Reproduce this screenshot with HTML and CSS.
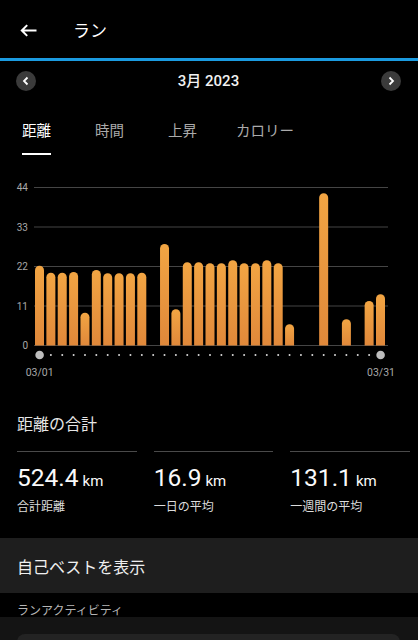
FILE: index.html
```html
<!DOCTYPE html>
<html lang="ja">
<head>
<meta charset="utf-8">
<title>ラン</title>
<link rel="stylesheet" href="styles.css">
</head>
<body>
<div class="app">
  <header class="topbar">
    <svg class="back" width="17" height="13" viewBox="0 0 17 13"><path d="M1.8 6.5H16.5M7.2 1.1L1.8 6.5L7.2 11.9" fill="none" stroke="#fff" stroke-width="2"/></svg>
    <h1 class="title">ラン</h1>
  </header>
  <div class="accent"></div>
  <div class="month">
    <span class="nav"><svg width="20" height="20" viewBox="0 0 20 20"><path d="M11.5 6.5L8 10L11.5 13.5" fill="none" stroke="#fff" stroke-width="1.8"/></svg></span>
    <span class="month-label">3月 2023</span>
    <span class="nav"><svg width="20" height="20" viewBox="0 0 20 20"><path d="M8.5 6.5L12 10L8.5 13.5" fill="none" stroke="#fff" stroke-width="1.8"/></svg></span>
  </div>
  <nav class="tabs">
    <div class="tab active"><span class="tab-label">距離</span></div>
    <div class="tab"><span class="tab-label">時間</span></div>
    <div class="tab"><span class="tab-label">上昇</span></div>
    <div class="tab"><span class="tab-label">カロリー</span></div>
  </nav>
  <div class="chart">
    <svg width="418" height="215" viewBox="0 0 418 215">
      <defs>
        <linearGradient id="barg" x1="0" y1="0" x2="0" y2="1">
          <stop offset="0" stop-color="#f2a543"/>
          <stop offset="1" stop-color="#e0883a"/>
        </linearGradient>
      </defs>
      <g stroke="#454545" stroke-width="1">
        <line x1="34" y1="17.5" x2="388" y2="17.5"/>
        <line x1="34" y1="57" x2="388" y2="57"/>
        <line x1="34" y1="96.5" x2="388" y2="96.5"/>
        <line x1="34" y1="136" x2="388" y2="136"/>
        <line x1="34" y1="175.5" x2="388" y2="175.5"/>
      </g>
      <g class="axis" fill="#a8a8a8" font-size="10" text-anchor="end">
        <text x="28" y="21">44</text>
        <text x="28" y="60.5">33</text>
        <text x="28" y="100">22</text>
        <text x="28" y="139.5">11</text>
        <text x="28" y="179">0</text>
      </g>
      <g fill="url(#barg)">
        <path d="M35 175.5V100.2a4.5 4.5 0 0 1 9 0V175.5Z"/>
        <path d="M46.37 175.5V107.2a4.5 4.5 0 0 1 9 0V175.5Z"/>
        <path d="M57.73 175.5V107.2a4.5 4.5 0 0 1 9 0V175.5Z"/>
        <path d="M69.1 175.5V106.5a4.5 4.5 0 0 1 9 0V175.5Z"/>
        <path d="M80.47 175.5V147.2a4.5 4.5 0 0 1 9 0V175.5Z"/>
        <path d="M91.83 175.5V104.5a4.5 4.5 0 0 1 9 0V175.5Z"/>
        <path d="M103.2 175.5V107.8a4.5 4.5 0 0 1 9 0V175.5Z"/>
        <path d="M114.57 175.5V107.8a4.5 4.5 0 0 1 9 0V175.5Z"/>
        <path d="M125.93 175.5V107.8a4.5 4.5 0 0 1 9 0V175.5Z"/>
        <path d="M137.3 175.5V107.2a4.5 4.5 0 0 1 9 0V175.5Z"/>
        <path d="M160.03 175.5V78.5a4.5 4.5 0 0 1 9 0V175.5Z"/>
        <path d="M171.4 175.5V143.8a4.5 4.5 0 0 1 9 0V175.5Z"/>
        <path d="M182.77 175.5V96.8a4.5 4.5 0 0 1 9 0V175.5Z"/>
        <path d="M194.13 175.5V96.8a4.5 4.5 0 0 1 9 0V175.5Z"/>
        <path d="M205.5 175.5V97.8a4.5 4.5 0 0 1 9 0V175.5Z"/>
        <path d="M216.87 175.5V97.8a4.5 4.5 0 0 1 9 0V175.5Z"/>
        <path d="M228.23 175.5V94.8a4.5 4.5 0 0 1 9 0V175.5Z"/>
        <path d="M239.6 175.5V97.8a4.5 4.5 0 0 1 9 0V175.5Z"/>
        <path d="M250.97 175.5V97.8a4.5 4.5 0 0 1 9 0V175.5Z"/>
        <path d="M262.33 175.5V94.8a4.5 4.5 0 0 1 9 0V175.5Z"/>
        <path d="M273.7 175.5V97.8a4.5 4.5 0 0 1 9 0V175.5Z"/>
        <path d="M285.07 175.5V158.8a4.5 4.5 0 0 1 9 0V175.5Z"/>
        <path d="M319.17 175.5V27.8a4.5 4.5 0 0 1 9 0V175.5Z"/>
        <path d="M341.9 175.5V153.8a4.5 4.5 0 0 1 9 0V175.5Z"/>
        <path d="M364.63 175.5V135.5a4.5 4.5 0 0 1 9 0V175.5Z"/>
        <path d="M376 175.5V128.8a4.5 4.5 0 0 1 9 0V175.5Z"/>
      </g>
      <g fill="#d8d8d8">
        <circle cx="50.87" cy="185" r="1"/>
        <circle cx="62.23" cy="185" r="1"/>
        <circle cx="73.6" cy="185" r="1"/>
        <circle cx="84.97" cy="185" r="1"/>
        <circle cx="96.33" cy="185" r="1"/>
        <circle cx="107.7" cy="185" r="1"/>
        <circle cx="119.07" cy="185" r="1"/>
        <circle cx="130.43" cy="185" r="1"/>
        <circle cx="141.8" cy="185" r="1"/>
        <circle cx="153.17" cy="185" r="1"/>
        <circle cx="164.53" cy="185" r="1"/>
        <circle cx="175.9" cy="185" r="1"/>
        <circle cx="187.27" cy="185" r="1"/>
        <circle cx="198.63" cy="185" r="1"/>
        <circle cx="210" cy="185" r="1"/>
        <circle cx="221.37" cy="185" r="1"/>
        <circle cx="232.73" cy="185" r="1"/>
        <circle cx="244.1" cy="185" r="1"/>
        <circle cx="255.47" cy="185" r="1"/>
        <circle cx="266.83" cy="185" r="1"/>
        <circle cx="278.2" cy="185" r="1"/>
        <circle cx="289.57" cy="185" r="1"/>
        <circle cx="300.93" cy="185" r="1"/>
        <circle cx="312.3" cy="185" r="1"/>
        <circle cx="323.67" cy="185" r="1"/>
        <circle cx="335.03" cy="185" r="1"/>
        <circle cx="346.4" cy="185" r="1"/>
        <circle cx="357.77" cy="185" r="1"/>
        <circle cx="369.13" cy="185" r="1"/>
      </g>
      <circle cx="39.6" cy="185" r="4.3" fill="#bdbdbd"/>
      <circle cx="380.6" cy="185" r="4.3" fill="#bdbdbd"/>
      <g class="axis" fill="#a8a8a8" font-size="10.5" text-anchor="middle">
        <text x="39.6" y="205.5">03/01</text>
        <text x="381" y="205.5">03/31</text>
      </g>
    </svg>
  </div>
  <section class="summary">
    <h2 class="summary-title">距離の合計</h2>
    <div class="stats">
      <div class="stat">
        <div class="stat-value">524.4<span class="unit">km</span></div>
        <div class="stat-label">合計距離</div>
      </div>
      <div class="stat">
        <div class="stat-value">16.9<span class="unit">km</span></div>
        <div class="stat-label">一日の平均</div>
      </div>
      <div class="stat">
        <div class="stat-value">131.1<span class="unit">km</span></div>
        <div class="stat-label">一週間の平均</div>
      </div>
    </div>
  </section>
  <div class="best">自己ベストを表示</div>
  <div class="section-label">ランアクティビティ</div>
  <div class="activity"><div class="card"></div></div>
</div>
</body>
</html>
```
FILE: styles.css
```css
html, body {
  margin: 0;
  padding: 0;
  background: #000;
}
body {
  font-family: Roboto, "Noto Sans CJK JP", sans-serif;
  color: #fff;
  overflow: hidden;
}
.app {
  width: 418px;
  height: 640px;
  overflow: hidden;
}
.topbar {
  height: 58px;
  display: flex;
  align-items: center;
  padding-left: 20px;
  box-sizing: border-box;
}
.back {
  display: block;
  margin-top: 3px;
}
.title {
  margin: 3px 0 0 36px;
  font-size: 17px;
  font-weight: 400;
  line-height: 20px;
}
.accent {
  height: 3px;
  background: #1b9be0;
}
.month {
  height: 40px;
  display: flex;
  align-items: center;
  justify-content: space-between;
  padding: 0 17px 0 16px;
}
.nav {
  width: 20px;
  height: 20px;
  border-radius: 50%;
  background: #3b3b3b;
  display: block;
}
.nav svg {
  display: block;
}
.month-label {
  font-size: 15px;
  font-weight: 500;
  line-height: 20px;
  color: #f2f2f2;
}
.tabs {
  display: flex;
  padding-top: 21px;
}
.tab {
  min-width: 73px;
  padding: 0 17px;
  box-sizing: border-box;
  display: flex;
  justify-content: center;
}
.tab-label {
  font-size: 14.5px;
  line-height: 20px;
  padding-bottom: 11px;
  border-bottom: 2px solid transparent;
  color: #ababab;
}
.tab.active .tab-label {
  color: #fff;
  border-bottom-color: #fff;
}
.chart {
  margin-top: 15px;
  height: 215px;
}
.chart svg {
  display: block;
}
.axis {
  font-family: Roboto, sans-serif;
}
.summary {
  padding: 0 8px 0 17px;
}
.summary-title {
  margin: 30px 0 0;
  font-size: 16px;
  font-weight: 400;
  line-height: 20px;
  color: #e6e6e6;
}
.stats {
  display: grid;
  grid-template-columns: repeat(3, 1fr);
  column-gap: 17px;
  margin-top: 16px;
}
.stat {
  border-top: 1px solid #4a4a4a;
}
.stat-value {
  margin-top: 11px;
  font-size: 24.5px;
  line-height: 30px;
  color: #fafafa;
}
.unit {
  font-size: 15px;
  margin-left: 4px;
}
.stat-label {
  margin-top: 3px;
  font-size: 12px;
  line-height: 16px;
  color: #dcdcdc;
}
.best {
  margin-top: 23px;
  height: 55px;
  background: #1e1e1e;
  display: flex;
  align-items: center;
  padding-left: 17px;
  font-size: 16px;
  color: #efefef;
}
.section-label {
  padding: 10px 0 0 17px;
  height: 24px;
  box-sizing: border-box;
  font-size: 12px;
  line-height: 16px;
  color: #b5b5b5;
}
.activity {
  background: #141414;
  padding: 17px 18px 0 17px;
  height: 60px;
}
.card {
  height: 60px;
  background: #232323;
  border-radius: 8px;
}
```
